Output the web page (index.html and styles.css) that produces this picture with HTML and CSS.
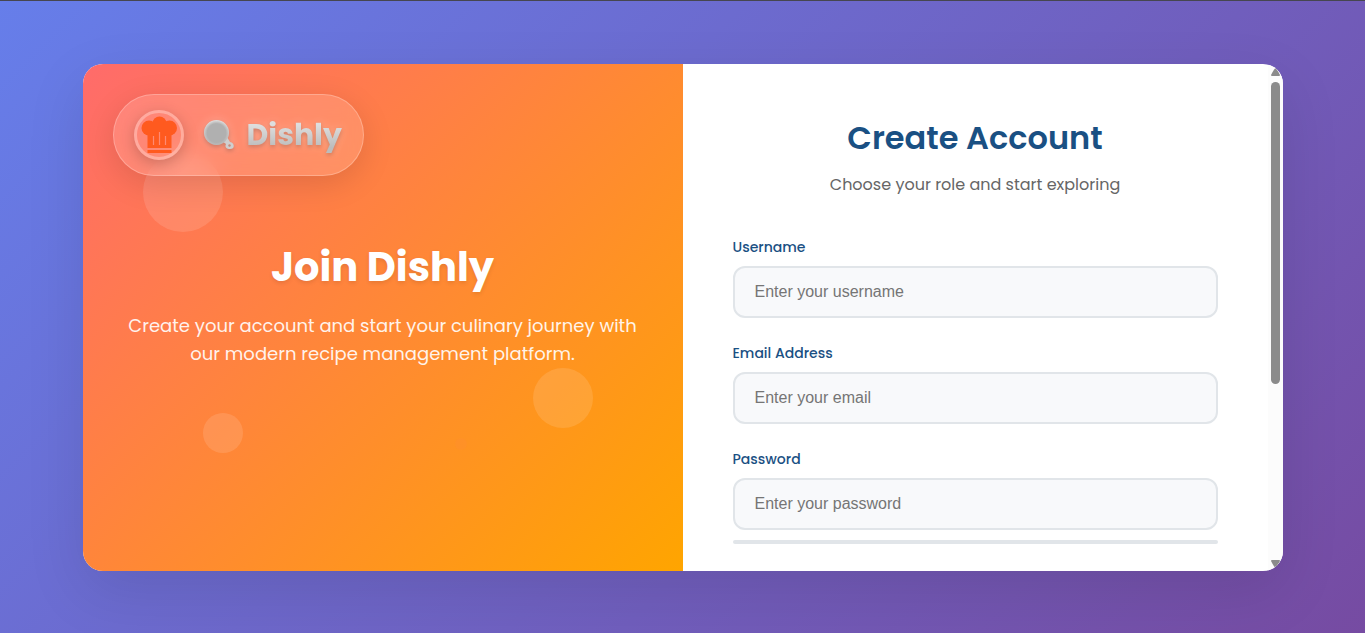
FILE: index.html
```html
<!DOCTYPE html>
<html lang="en">
<head>
<meta charset="utf-8">
<meta name="viewport" content="width=device-width, initial-scale=1">
<title>Dishly - Create Account</title>
<link rel="stylesheet" href="styles.css">
</head>
<body class="page">
<main class="card">
  <section class="welcome">
    <span class="bubble bubble-large"></span>
    <span class="bubble bubble-medium"></span>
    <span class="bubble bubble-small"></span>
    <span class="bubble bubble-tiny"></span>
    <div class="brand">
      <span class="brand-badge">
        <svg class="hat" viewBox="0 0 36 38" aria-hidden="true">
          <g fill="#ff5a1f">
            <circle cx="8" cy="12" r="7.5"/><circle cx="18.500" cy="7.500" r="7"/><circle cx="28.500" cy="12" r="7.5"/>
            <path d="M6.500 9h24v23h-24zM6.500 34h24v3h-24z"/>
          </g>
          <path d="M12.500 20v9M18.500 16v13M24.500 20v9" stroke="#ff8a73" stroke-width="1.2"/>
        </svg>
      </span>
      <svg class="pan" viewBox="0 0 32 32" aria-hidden="true">
        <defs>
          <linearGradient id="steel" x1="0" y1="0" x2="0" y2="1"><stop offset="0" stop-color="#dcdcdc"/><stop offset="1" stop-color="#bcbcbc"/></linearGradient>
          <radialGradient id="base"><stop offset="0.75" stop-color="#b0b0b0"/><stop offset="1" stop-color="#b0b0b0" stop-opacity="0"/></radialGradient>
        </defs>
        <path d="M19 22l5-4 3 5c5 1 5 7 0 7s-5-3-4-5z" fill="#cfcfcf"/>
        <circle cx="13.500" cy="13.500" r="12.500" fill="url(#steel)"/>
        <circle cx="13.500" cy="14" r="12.500" fill="url(#base)"/>
        <circle cx="26.500" cy="26.500" r="1.200" fill="#c8897c"/>
      </svg>
      <span class="brand-name">Dishly</span>
    </div>
    <h1 class="welcome-title">Join Dishly</h1>
    <p class="welcome-text">Create your account and start your culinary journey with our modern recipe management platform.</p>
  </section>
  <section class="signup">
    <form class="form">
      <h2 class="form-title">Create Account</h2>
      <p class="form-subtitle">Choose your role and start exploring</p>
      <div class="field">
        <label class="label" for="username">Username</label>
        <input class="input" id="username" type="text" placeholder="Enter your username">
      </div>
      <div class="field">
        <label class="label" for="email">Email Address</label>
        <input class="input" id="email" type="email" placeholder="Enter your email">
      </div>
      <div class="field">
        <label class="label" for="password">Password</label>
        <input class="input" id="password" type="password" placeholder="Enter your password">
        <div class="strength"></div>
      </div>
    </form>
    <div class="scrollbar" aria-hidden="true">
      <svg class="arrow" viewBox="0 0 9 8"><path d="M4.5 0Q5.3 0 9 7Q9 8 8 8H1Q0 8 0 7Q3.7 0 4.5 0z"/></svg>
      <div class="track"><div class="thumb"></div></div>
      <svg class="arrow" viewBox="0 0 9 8"><path d="M4.5 8Q5.3 8 9 1Q9 0 8 0H1Q0 0 0 1Q3.7 8 4.5 8z"/></svg>
    </div>
  </section>
</main>
</body>
</html>
```
FILE: styles.css
```css
* { box-sizing: border-box; margin: 0; padding: 0; }
.page {
  min-height: 100vh;
  display: flex;
  align-items: center;
  justify-content: center;
  padding: 21px 20px 20px;
  border-top: 1px solid #464650;
  background: linear-gradient(135deg, #667eea 0%, #764ba2 100%);
  font-family: Poppins, Inter, "Open Sans", sans-serif;
}
.card {
  width: 100%;
  max-width: 1200px;
  height: 80vh;
  display: grid;
  grid-template-columns: 1fr 1fr;
  overflow: hidden;
  border-radius: 20px;
  background: #fff;
  box-shadow: 0 20px 60px rgba(0, 0, 0, 0.1);
}
.welcome {
  position: relative;
  display: flex;
  flex-direction: column;
  align-items: center;
  justify-content: center;
  padding: 40px;
  text-align: center;
  color: #fff;
  background: linear-gradient(135deg, #ff6b6b 0%, #ffa500 100%);
}
.bubble { position: absolute; border-radius: 50%; background: rgba(255, 255, 255, 0.12); }
.bubble-large { width: 80px; height: 80px; left: 10%; top: 88px; }
.bubble-medium { width: 60px; height: 60px; right: 15%; top: 60%; }
.bubble-small { width: 40px; height: 40px; left: 20%; bottom: 118px; }
.bubble-tiny { width: 12px; height: 12px; right: 36%; bottom: 121px; background: rgba(255, 140, 60, 0.2); }
.brand {
  position: absolute;
  top: 30px;
  left: 30px;
  display: flex;
  align-items: center;
  padding: 15px 21px 15px 20px;
  border: 1px solid rgba(255, 255, 255, 0.25);
  border-radius: 50px;
  background: rgba(255, 255, 255, 0.15);
  backdrop-filter: blur(10px);
  box-shadow: 0 8px 32px rgba(0, 0, 0, 0.12);
}
.brand-badge {
  width: 50px;
  height: 50px;
  display: flex;
  align-items: center;
  justify-content: center;
  border: 3px solid rgba(255, 255, 255, 0.3);
  border-radius: 50%;
  box-shadow: 0 4px 15px rgba(0, 0, 0, 0.2);
}
.hat { width: 36px; height: 38px; flex: none; }
.pan { width: 32px; height: 32px; margin: 0 12px 0 19px; filter: drop-shadow(0 2px 2px rgba(0, 0, 0, 0.2)) drop-shadow(0 0 5px rgba(255, 255, 255, 0.25)); }
.brand-name {
  font-size: 30px;
  line-height: 50px;
  font-weight: 700;
  color: transparent;
  background: linear-gradient(180deg, #dedede 30%, #bcbcbc 75%);
  background-clip: text;
  filter: drop-shadow(0 2px 2px rgba(0, 0, 0, 0.2)) drop-shadow(0 0 5px rgba(255, 255, 255, 0.25));
}
.welcome-title {
  margin-bottom: 15px;
  font-size: 40px;
  line-height: 60px;
  font-weight: 700;
  text-shadow: 0 2px 4px rgba(0, 0, 0, 0.1);
}
.welcome-text { max-width: 520px; margin-bottom: 30px; font-size: 18px; line-height: 28px; opacity: 0.9; }
.signup { display: flex; min-width: 0; min-height: 0; }
.form { flex: 1; min-width: 0; padding: 50px; overflow: hidden; }
.form-title {
  margin-bottom: 10px;
  text-align: center;
  font-size: 32px;
  line-height: 48px;
  font-weight: 600;
  color: #1a5083;
}
.form-subtitle { margin-bottom: 38px; text-align: center; font-size: 16px; line-height: 26px; color: #666; }
.field { margin-bottom: 24px; }
.label { display: block; margin-bottom: 8px; font-size: 14px; line-height: 22px; font-weight: 500; color: #1a5083; }
.input {
  display: block;
  width: 100%;
  height: 52px;
  padding: 0 20px;
  border: 2px solid #e1e5e9;
  border-radius: 12px;
  background: #f8f9fb;
  font-family: "Liberation Sans", Arial, sans-serif;
  font-size: 16px;
}
.input::placeholder { color: #757575; }
.strength { height: 4px; margin-top: 10px; border-radius: 2px; background: #e1e5e9; }
.scrollbar {
  width: 15px;
  display: flex;
  flex-direction: column;
  align-items: center;
  padding: 4px 0 3px;
  background: #fcfcfc;
}
.arrow { width: 9px; height: 8px; fill: #8b8b8b; }
.track { flex: 1; padding: 6px 0; }
.thumb { width: 9px; height: 64%; border-radius: 5px; background: #8b8b8b; }
```
